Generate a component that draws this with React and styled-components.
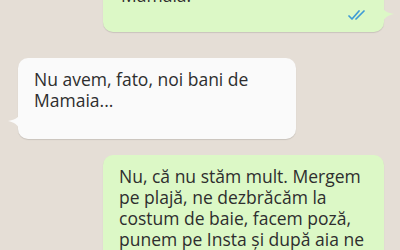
import React from "react";
import styled, { createGlobalStyle } from "styled-components";

const GlobalStyle = createGlobalStyle`
  html, body {
    margin: 0;
    padding: 0;
  }
  body {
    font-family: "Open Sans", "Liberation Sans", sans-serif;
  }
`;

const Chat = styled.div`
  width: 400px;
  height: 250px;
  overflow: hidden;
  background-color: #e5ded6;
  display: flex;
  flex-direction: column;
`;

const Row = styled.div`
  display: flex;
  justify-content: ${(p) => (p.$out ? "flex-end" : "flex-start")};
  padding: ${(p) => (p.$out ? "0 16px 0 0" : "0 0 0 18px")};
  margin-top: ${(p) => p.$gap}px;
`;

const Bubble = styled.div`
  position: relative;
  box-sizing: border-box;
  width: ${(p) => p.$width}px;
  background: ${(p) => (p.$out ? "#dcf8c6" : "#fafafa")};
  border-radius: 10px;
  padding: ${(p) => p.$pad};
  color: #2e2e2e;
  font-size: 17.5px;
  line-height: 21px;
  white-space: nowrap;
  box-shadow: 0 1px 1px rgba(0, 0, 0, 0.12);
`;

const Tail = styled.svg`
  position: absolute;
  width: 12px;
  height: 16px;
  ${(p) => (p.$out ? "right: -10px;" : "left: -10px;")}
  bottom: ${(p) => p.$bottom}px;
`;

const Meta = styled.div`
  display: flex;
  justify-content: flex-end;
  align-items: flex-end;
  height: 14px;
`;

function Ticks() {
  return (
    <svg width="20" height="10" viewBox="0 0 20 10">
      <path d="M1 6 L4 9 L11 1" fill="none" stroke="#3e9bd6" strokeWidth="1.7" strokeLinecap="round" strokeLinejoin="round" />
      <path d="M8 9 L16 1" fill="none" stroke="#3e9bd6" strokeWidth="1.7" strokeLinecap="round" />
    </svg>
  );
}

export default function App() {
  return (
    <>
      <GlobalStyle />
      <Chat>
        <Row $out $gap={-15}>
          <Bubble $out $width={281} $pad="0 16px 12px 18px">
            Mamaia.
            <Meta>
              <Ticks />
            </Meta>
            <Tail $out $bottom={9} viewBox="0 0 12 16">
              <path d="M0 0 C2 4 6 6 12 7 C6 8 2 11 0 16 Z" fill="#dcf8c6" />
            </Tail>
          </Bubble>
        </Row>
        <Row $gap={26}>
          <Bubble $width={278} $pad="11px 16px 28px 16px">
            Nu avem, fato, noi bani de
            <br />
            Mamaia...
            <Tail $bottom={9} viewBox="0 0 12 16">
              <path d="M12 0 C10 4 6 6 0 7 C6 8 10 11 12 16 Z" fill="#fafafa" />
            </Tail>
          </Bubble>
        </Row>
        <Row $out $gap={16}>
          <Bubble $out $width={281} $pad="11px 12px 12px 16px">
            Nu, că nu stăm mult. Mergem
            <br />
            pe plajă, ne dezbrăcăm la
            <br />
            costum de baie, facem poză,
            <br />
            punem pe Insta și după aia ne
            <br />
            îmbrăcăm la loc.
          </Bubble>
        </Row>
      </Chat>
    </>
  );
}
